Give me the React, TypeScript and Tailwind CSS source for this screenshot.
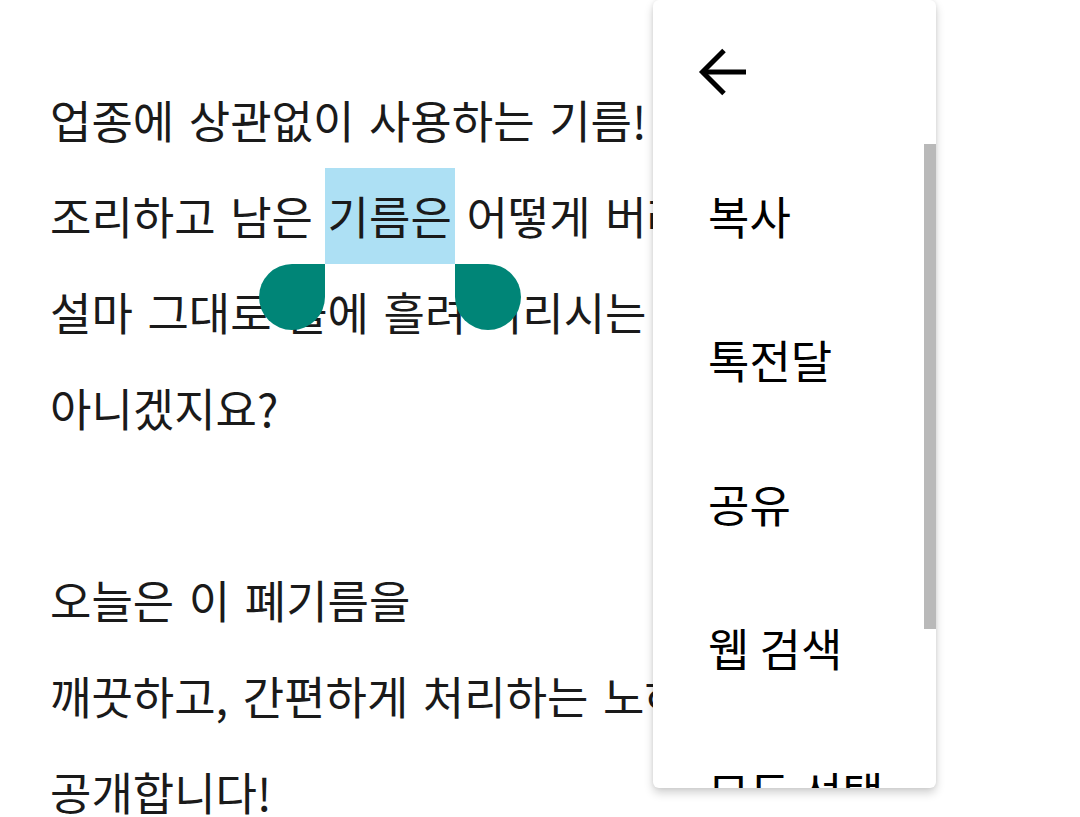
import React from "react";

function Handle({ side }: { side: "left" | "right" }) {
    return (
        <span
            className={
                side === "left"
                    ? "absolute right-full top-full w-[66px] h-[66px] rounded-full rounded-tr-none bg-[#008577]"
                    : "absolute left-full top-full w-[66px] h-[66px] rounded-full rounded-tl-none bg-[#008577]"
            }
        />
    );
}

function BackArrow() {
    return (
        <svg width="48" height="48" viewBox="0 0 48 48" fill="none">
            <path d="M48 24H6" stroke="#000" strokeWidth="5" />
            <path d="M26 2.5L4.5 24L26 45.5" stroke="#000" strokeWidth="5" strokeLinejoin="miter" />
        </svg>
    );
}

const menuItems = ["복사", "톡전달", "공유", "웹 검색", "모두 선택"];

export default function App() {
    return (
        <div className="relative w-[1080px] h-[817px] overflow-hidden bg-white font-['Noto_Sans_CJK_KR','Noto_Sans',sans-serif]">
            {/* article text */}
            <div className="pl-[50px] pt-[72px] text-[45px] leading-[96px] text-[#1a1a1a] whitespace-nowrap [word-spacing:4.5px]">
                <p>업종에 상관없이 사용하는 기름!</p>
                <p>
                    조리하고 남은{" "}
                    <span className="relative inline-block h-[96px] -mx-[3px] px-[3px] bg-[#ade0f4] align-top">
                        기름은
                        <Handle side="left" />
                        <Handle side="right" />
                    </span>{" "}
                    어떻게 버려야 할까요?
                </p>
                <p>설마 그대로 물에 흘려 버리시는 건</p>
                <p>아니겠지요?</p>
                <p>&nbsp;</p>
                <p>오늘은 이 폐기름을</p>
                <p>깨끗하고, 간편하게 처리하는 노하우를</p>
                <p>공개합니다!</p>
            </div>

            {/* text selection popup */}
            <div className="absolute left-[653px] top-0 w-[283px] h-[788px] bg-white rounded-[6px] overflow-hidden shadow-[0_5px_10px_rgba(0,0,0,0.18),0_0_4px_rgba(0,0,0,0.08)]">
                <div className="h-[144px] flex items-center pl-[45px]">
                    <BackArrow />
                </div>
                <div className="relative">
                    {menuItems.map((item) => (
                        <div
                            key={item}
                            className="h-[144px] flex items-center pl-[55px] text-[45px] text-black whitespace-nowrap"
                        >
                            {item}
                        </div>
                    ))}
                    <div className="absolute right-0 top-0 w-[12px] h-[485px] bg-[#b9b9b9]" />
                </div>
            </div>
        </div>
    );
}
